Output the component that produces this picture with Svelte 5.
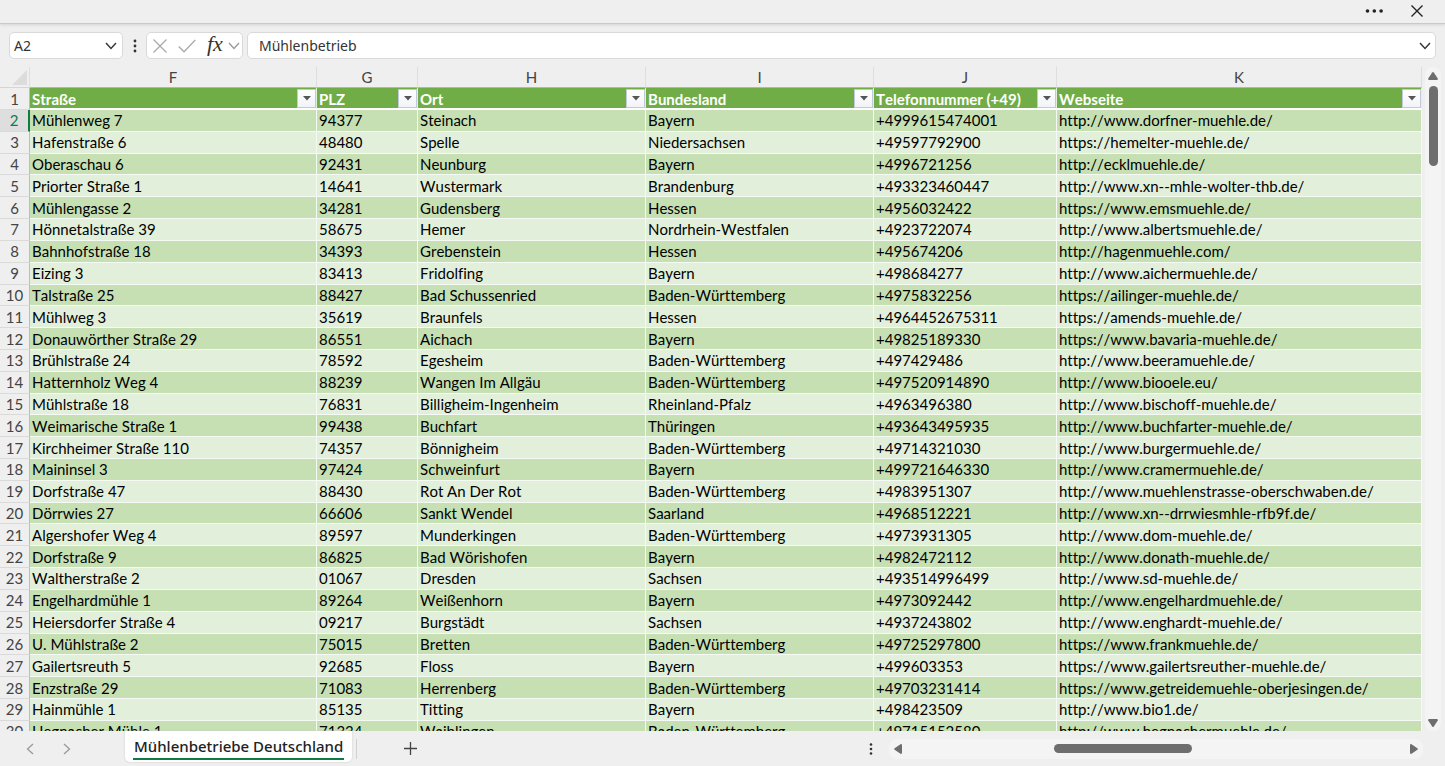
<script>
  const columns = [
    { letter: 'F', title: 'Straße', width: 287 },
    { letter: 'G', title: 'PLZ', width: 101 },
    { letter: 'H', title: 'Ort', width: 228 },
    { letter: 'I', title: 'Bundesland', width: 228 },
    { letter: 'J', title: 'Telefonnummer (+49)', width: 183 },
    { letter: 'K', title: 'Webseite', width: null }
  ];

  const rows = [
    ['Mühlenweg 7', '94377', 'Steinach', 'Bayern', '+4999615474001', 'http://www.dorfner-muehle.de/'],
    ['Hafenstraße 6', '48480', 'Spelle', 'Niedersachsen', '+49597792900', 'https://hemelter-muehle.de/'],
    ['Oberaschau 6', '92431', 'Neunburg', 'Bayern', '+4996721256', 'http://ecklmuehle.de/'],
    ['Priorter Straße 1', '14641', 'Wustermark', 'Brandenburg', '+493323460447', 'http://www.xn--mhle-wolter-thb.de/'],
    ['Mühlengasse 2', '34281', 'Gudensberg', 'Hessen', '+4956032422', 'https://www.emsmuehle.de/'],
    ['Hönnetalstraße 39', '58675', 'Hemer', 'Nordrhein-Westfalen', '+4923722074', 'http://www.albertsmuehle.de/'],
    ['Bahnhofstraße 18', '34393', 'Grebenstein', 'Hessen', '+495674206', 'http://hagenmuehle.com/'],
    ['Eizing 3', '83413', 'Fridolfing', 'Bayern', '+498684277', 'http://www.aichermuehle.de/'],
    ['Talstraße 25', '88427', 'Bad Schussenried', 'Baden-Württemberg', '+4975832256', 'https://ailinger-muehle.de/'],
    ['Mühlweg 3', '35619', 'Braunfels', 'Hessen', '+4964452675311', 'https://amends-muehle.de/'],
    ['Donauwörther Straße 29', '86551', 'Aichach', 'Bayern', '+49825189330', 'https://www.bavaria-muehle.de/'],
    ['Brühlstraße 24', '78592', 'Egesheim', 'Baden-Württemberg', '+497429486', 'http://www.beeramuehle.de/'],
    ['Hatternholz Weg 4', '88239', 'Wangen Im Allgäu', 'Baden-Württemberg', '+497520914890', 'http://www.biooele.eu/'],
    ['Mühlstraße 18', '76831', 'Billigheim-Ingenheim', 'Rheinland-Pfalz', '+4963496380', 'http://www.bischoff-muehle.de/'],
    ['Weimarische Straße 1', '99438', 'Buchfart', 'Thüringen', '+493643495935', 'http://www.buchfarter-muehle.de/'],
    ['Kirchheimer Straße 110', '74357', 'Bönnigheim', 'Baden-Württemberg', '+49714321030', 'http://www.burgermuehle.de/'],
    ['Maininsel 3', '97424', 'Schweinfurt', 'Bayern', '+499721646330', 'http://www.cramermuehle.de/'],
    ['Dorfstraße 47', '88430', 'Rot An Der Rot', 'Baden-Württemberg', '+4983951307', 'http://www.muehlenstrasse-oberschwaben.de/'],
    ['Dörrwies 27', '66606', 'Sankt Wendel', 'Saarland', '+4968512221', 'http://www.xn--drrwiesmhle-rfb9f.de/'],
    ['Algershofer Weg 4', '89597', 'Munderkingen', 'Baden-Württemberg', '+4973931305', 'http://www.dom-muehle.de/'],
    ['Dorfstraße 9', '86825', 'Bad Wörishofen', 'Bayern', '+4982472112', 'http://www.donath-muehle.de/'],
    ['Waltherstraße 2', '01067', 'Dresden', 'Sachsen', '+493514996499', 'http://www.sd-muehle.de/'],
    ['Engelhardmühle 1', '89264', 'Weißenhorn', 'Bayern', '+4973092442', 'http://www.engelhardmuehle.de/'],
    ['Heiersdorfer Straße 4', '09217', 'Burgstädt', 'Sachsen', '+4937243802', 'http://www.enghardt-muehle.de/'],
    ['U. Mühlstraße 2', '75015', 'Bretten', 'Baden-Württemberg', '+49725297800', 'https://www.frankmuehle.de/'],
    ['Gailertsreuth 5', '92685', 'Floss', 'Bayern', '+499603353', 'https://www.gailertsreuther-muehle.de/'],
    ['Enzstraße 29', '71083', 'Herrenberg', 'Baden-Württemberg', '+49703231414', 'https://www.getreidemuehle-oberjesingen.de/'],
    ['Hainmühle 1', '85135', 'Titting', 'Bayern', '+498423509', 'http://www.bio1.de/'],
    ['Hegnacher Mühle 1', '71334', 'Waiblingen', 'Baden-Württemberg', '+49715152580', 'http://www.hegnachermuehle.de/']
  ];

  let cellName = $state('A2');
  let formula = $state('Mühlenbetrieb');
</script>

<div class="app">
  <header class="titlebar">
    <button class="icon" aria-label="Mehr Optionen">
      <svg width="20" height="20" viewBox="0 0 20 20" fill="#222"><circle cx="3.5" cy="10" r="1.8" /><circle cx="10.3" cy="10" r="1.8" /><circle cx="17.1" cy="10" r="1.8" /></svg>
    </button>
    <button class="icon" aria-label="Schließen">
      <svg width="14" height="14" viewBox="0 0 14 14" fill="none" stroke="#222" stroke-width="1.4"><path d="M1.5 1.5l11 11M12.500 1.500l-11 11" /></svg>
    </button>
  </header>

  <div class="formulabar">
    <div class="box namebox">
      <input aria-label="Namenfeld" bind:value={cellName} />
      <button class="icon" aria-label="Namen anzeigen">
        <svg width="12" height="8" viewBox="0 0 12 8" fill="none" stroke="#333" stroke-width="1.4"><path d="M1 1l5 5.500L11 1" /></svg>
      </button>
    </div>
    <svg class="grip" width="4" height="14" viewBox="0 0 4 14" fill="#333"><circle cx="2" cy="2" r="1.4" /><circle cx="2" cy="7" r="1.400" /><circle cx="2" cy="12" r="1.4" /></svg>
    <div class="box tools">
      <button class="icon" aria-label="Abbrechen">
        <svg width="14" height="14" viewBox="0 0 14 14" fill="none" stroke="#aaa" stroke-width="1.3"><path d="M.5 .5l13 13M13.500 .5l-13 13" /></svg>
      </button>
      <button class="icon" aria-label="Eingeben">
        <svg width="18" height="14" viewBox="0 0 18 14" fill="none" stroke="#aaa" stroke-width="1.3"><path d="M.7 7.500L6 12.800L17.300 1" /></svg>
      </button>
      <button class="icon fx" aria-label="Funktion einfügen">fx</button>
      <button class="icon" aria-label="Funktionen anzeigen">
        <svg width="12" height="8" viewBox="0 0 12 8" fill="none" stroke="#999" stroke-width="1.3"><path d="M1 1l5 5.500L11 1" /></svg>
      </button>
    </div>
    <div class="box formula">
      <input aria-label="Bearbeitungsleiste" bind:value={formula} />
      <button class="icon" aria-label="Bearbeitungsleiste erweitern">
        <svg width="12" height="8" viewBox="0 0 12 8" fill="none" stroke="#333" stroke-width="1.4"><path d="M1 1l5 5.500L11 1" /></svg>
      </button>
    </div>
  </div>

  <main>
    <div class="sheet">
      <table>
        <colgroup>
          <col class="numcol" />
          {#each columns as c}
            <col style:width={c.width ? `${c.width}px` : 'auto'} />
          {/each}
        </colgroup>
        <thead>
          <tr class="letters">
            <th class="corner" aria-label="Alles auswählen"><svg width="15" height="15" viewBox="0 0 15 15" fill="#dcdcdc"><path d="M15 0v15H0z" /></svg></th>
            {#each columns as c}<th scope="col">{c.letter}</th>{/each}
          </tr>
          <tr class="titles">
            <th class="num">1</th>
            {#each columns as c}
              <th scope="col" class="heading">
                <div class="title">
                  <span>{c.title}</span>
                  <button aria-label="{c.title} filtern"><svg width="8" height="5" viewBox="0 0 8 5" fill="#555"><path d="M0 0h8L4 4.500z" /></svg></button>
                </div>
              </th>
            {/each}
          </tr>
        </thead>
        <tbody>
          {#each rows as row, i}
            <tr>
              <th scope="row" class="num" class:active={i === 0}>{i + 2}</th>
              {#each row as value}<td>{value}</td>{/each}
            </tr>
          {/each}
        </tbody>
      </table>
    </div>
    <div class="vscroll">
      <button class="icon" aria-label="Nach oben"><svg width="10" height="8" viewBox="0 0 10 8" fill="#6e6e6e"><path d="M4.200 .6q.8-1 1.600 0L9.800 6.500q.4 1.500-1 1.500H1.200q-1.400 0-1-1.500z" /></svg></button>
      <div class="vtrack"><div class="vthumb"></div></div>
      <button class="icon" aria-label="Nach unten"><svg width="10" height="8" viewBox="0 0 10 8" fill="#6e6e6e"><path d="M4.200 7.400q.8 1 1.600 0L9.800 1.500Q10.200 0 8.800 0H1.200Q-.2 0 .2 1.500z" /></svg></button>
    </div>
  </main>

  <footer>
    <nav aria-label="Blätter">
      <button class="icon" aria-label="Vorheriges Blatt"><svg width="8" height="12" viewBox="0 0 8 12" fill="none" stroke="#999" stroke-width="1.3"><path d="M7 1L1.500 6L7 11" /></svg></button>
      <button class="icon" aria-label="Nächstes Blatt"><svg width="8" height="12" viewBox="0 0 8 12" fill="none" stroke="#999" stroke-width="1.3"><path d="M1 1l5.500 5L1 11" /></svg></button>
    </nav>
    <button class="tab"><span>Mühlenbetriebe Deutschland</span></button>
    <button class="icon add" aria-label="Neues Blatt"><svg width="13" height="13" viewBox="0 0 13 13" stroke="#444" stroke-width="1.300"><path d="M6.500 0v13M0 6.500h13" /></svg></button>
    <svg class="grip" width="4" height="12" viewBox="0 0 4 12" fill="#333"><circle cx="2" cy="1.500" r="1.300" /><circle cx="2" cy="6" r="1.300" /><circle cx="2" cy="10.500" r="1.300" /></svg>
    <div class="hscroll">
      <button class="icon" aria-label="Nach links"><svg width="8" height="10" viewBox="0 0 8 10" fill="#6e6e6e"><path d="M.6 4.200q-1 .8 0 1.600L6.500 9.800Q8 10.200 8 8.800V1.200Q8-.2 6.500 .2z" /></svg></button>
      <div class="htrack"><div class="hthumb"></div></div>
      <button class="icon" aria-label="Nach rechts"><svg width="8" height="10" viewBox="0 0 8 10" fill="#6e6e6e"><path d="M7.400 4.200q1 .8 0 1.600L1.500 9.800Q0 10.200 0 8.800V1.200Q0-.2 1.500 .2z" /></svg></button>
    </div>
  </footer>
</div>

<style>
  :global(body) { margin: 0; }
  .app {
    display: flex;
    flex-direction: column;
    height: 100vh;
    overflow: hidden;
    background: #efefef;
    color: #111;
    font-family: "Noto Sans", sans-serif;
    font-size: 14px;
  }
  button, input { font: inherit; color: inherit; border: 0; padding: 0; background: none; }
  .icon { display: flex; align-items: center; justify-content: center; flex: none; }
  svg { display: block; flex: none; }

  .titlebar {
    display: flex;
    justify-content: flex-end;
    align-items: center;
    gap: 26px;
    height: 22px;
    padding: 0 21px 1px 0;
    border-bottom: 1px solid #c9c9c9;
    box-shadow: 0 1px 3px #d4d4d4;
  }

  .formulabar { display: flex; align-items: center; padding: 8px 9px; }
  .box {
    display: flex;
    align-items: center;
    box-sizing: border-box;
    height: 27px;
    background: #fff;
    border: 1px solid #d9d9d9;
    border-radius: 5px;
  }
  .box input { flex: 1; min-width: 0; outline: 0; color: #333; }
  .namebox { width: 114px; padding: 0 5px 0 4px; }
  .formulabar .grip { margin: 0 9px 0 10px; }
  .tools { width: 97px; padding: 0 2px 0 6px; margin-right: 4px; }
  .tools .icon + .icon { margin-left: 11px; }
  .tools .icon:last-child { margin-left: auto; }
  .fx { font: italic 22px/20px "Liberation Serif", serif; color: #333; padding-bottom: 3px; }
  .formula { flex: 1; padding: 0 4px 0 11px; }

  main { flex: 1; min-height: 0; display: flex; }
  .sheet { flex: 1; min-width: 0; overflow: hidden; }
  table {
    width: 100%;
    height: calc(100% + 12px);
    table-layout: fixed;
    border-collapse: separate;
    border-spacing: 0;
    font-family: Lato, sans-serif;
    font-size: 15px;
    line-height: 20px;
    font-variant-ligatures: none;
    font-kerning: none;
  }
  .numcol { width: 30px; }
  th, td { padding: 0; box-sizing: border-box; white-space: nowrap; }
  .letters th {
    height: 21px;
    font-weight: 400;
    color: #444;
    border-right: 1px solid #dedede;
    border-bottom: 1px solid #b5b5b5;
  }
  .letters .corner { padding-left: 12px; border-bottom-color: #d5d5d5; }
  .num {
    color: #444;
    font-weight: 400;
    text-align: center;
    background: #efefef;
    border-right: 1px solid #bdbdbd;
    border-bottom: 1px solid #dadada;
  }
  .num.active { color: #107c41; background: #dedede; border-right: 2px solid #107c41; }
  .titles th { height: 22px; }
  .heading {
    text-align: left;
    color: #fff;
    background: #70ad47;
    border-right: 1px solid #e4f0dc;
    border-bottom: 2px solid #fff;
    padding-left: 2px;
  }
  .title { display: flex; justify-content: space-between; align-items: flex-end; height: 20px; line-height: 18px; }
  .title button {
    display: flex;
    align-items: center;
    justify-content: center;
    width: 19px;
    height: 19px;
    box-sizing: border-box;
    background: linear-gradient(#fff, #f1f3f8);
    border: 1px solid #c3c9da;
  }
  td {
    padding-left: 2px;
    color: #000;
    background: #e2efda;
    border-right: 1px solid #f6faf4;
    border-bottom: 1px solid #f6faf4;
  }
  tr:nth-child(odd) td { background: #c6e0b4; }

  .vscroll {
    display: flex;
    flex-direction: column;
    align-items: center;
    width: 16px;
    box-sizing: border-box;
    margin: 0 4px 0 3px;
    padding: 5px 0 4px;
    background: #f4f4f4;
    border-radius: 8px;
  }
  .vtrack { flex: 1; padding-top: 6px; }
  .vthumb { width: 9px; height: 80px; border-radius: 5px; background: #6e6e6e; }

  footer { display: flex; align-items: center; height: 35px; }
  nav { display: flex; gap: 29px; padding: 0 54px 0 26px; }
  .tab {
    align-self: flex-start;
    height: 31px;
    padding: 0 8px;
    background: #fff;
    border-radius: 0 0 5px 5px;
    box-shadow: 0 0 2px #c4c4c4;
    font-size: 15px;
    font-weight: 500;
    color: #222;
  }
  .tab span { display: block; border-bottom: 2px solid #107c41; line-height: 24px; padding: 0 1px; }
  .add { padding-left: 47px; margin-left: 4px; border-left: 1px solid #d0d0d0; height: 20px; }
  footer .grip { margin: 0 16px 0 auto; }
  .hscroll {
    display: flex;
    align-items: center;
    width: 534px;
    height: 20px;
    box-sizing: border-box;
    padding: 0 5px;
    margin-right: 22px;
    background: #f4f4f4;
    border-radius: 8px;
  }
  .htrack { flex: 1; padding-left: 152px; }
  .hthumb { width: 138px; height: 9px; border-radius: 5px; background: #6e6e6e; }
</style>
